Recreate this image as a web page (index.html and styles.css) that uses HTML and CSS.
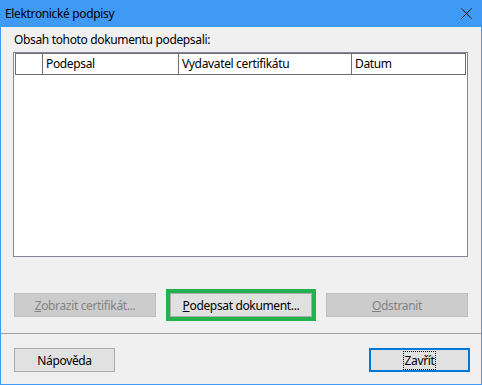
FILE: index.html
```html
<!DOCTYPE html>
<html lang="cs">
<head>
    <meta charset="UTF-8">
    <title>Elektronické podpisy</title>
    <link rel="stylesheet" href="styles.css">
</head>
<body>

    <div class="window">
        <div class="titlebar">
            <span class="title">Elektronické podpisy</span>
            <svg class="close" width="11" height="11" viewBox="0 0 11 11">
                <path d="M0.5 0.5 L10.5 10.5 M10.5 0.5 L0.5 10.5" stroke="#000" stroke-width="1" fill="none"/>
            </svg>
        </div>

        <div class="content">
            <div class="caption">Obsah tohoto dokumentu podepsali:</div>

            <div class="list">
                <div class="list-head">
                    <div class="col"></div>
                    <div class="col">Podepsal</div>
                    <div class="col">Vydavatel certifikátu</div>
                    <div class="col">Datum</div>
                </div>
            </div>

            <div class="actions">
                <button class="btn" disabled><u>Z</u>obrazit certifikát...</button>
                <button class="btn highlight"><u>P</u>odepsat dokument...</button>
                <button class="btn" disabled><u>O</u>dstranit</button>
            </div>
        </div>

        <div class="footer">
            <button class="btn small">Nápověda</button>
            <button class="btn small default"><span class="focus">Zavřít</span></button>
        </div>
    </div>

</body>
</html>
```

FILE: styles.css
```css
* {
    margin: 0;
    padding: 0;
    box-sizing: border-box;
}

body {
    font-family: "Noto Sans", Arial, sans-serif;
    font-size: 12px;
    letter-spacing: -0.35px;
    color: #000000;
    background: #f0f0f0;
}

.window {
    width: 482px;
    height: 385px;
    border: 1px solid #3f9af5;
    border-top: none;
    background: #f0f0f0;
    display: flex;
    flex-direction: column;
}

.titlebar {
    height: 27px;
    background: #3f9af5;
    display: flex;
    justify-content: space-between;
    align-items: center;
    padding: 0 9px 0 4px;
}

.title {
    line-height: 15px;
}

.content {
    padding: 5px 13px 0 12px;
}

.caption {
    line-height: 15px;
    padding-left: 1px;
}

.list {
    margin-top: 5px;
    height: 205px;
    background: #ffffff;
    border: 1px solid #828790;
    padding: 0 1px 0 1px;
}

.list-head {
    display: grid;
    grid-template-columns: 26px 136px 173px 116px;
    height: 22px;
    border: 1px solid #6e6e6e;
}

.list-head .col {
    line-height: 19px;
    padding-left: 3px;
    border-left: 1px solid #6e6e6e;
}

.list-head .col:first-child {
    border-left: none;
}

.actions {
    margin-top: 36px;
    display: grid;
    grid-template-columns: 142px 142px 142px;
    justify-content: space-between;
    padding-left: 1px;
}

.btn {
    font-family: inherit;
    font-size: 12px;
    letter-spacing: inherit;
    color: #000000;
    height: 24px;
    background: #e1e1e1;
    border: 1px solid #adadad;
}

.btn:disabled {
    background: #cccccc;
    border-color: #bfbfbf;
    color: #838383;
}

.btn.highlight {
    outline: 4px solid #22b14c;
    outline-offset: 0;
}

.footer {
    margin-top: 16px;
    border-top: 1px solid #a0a0a0;
    padding: 14px 11px 0 13px;
    display: flex;
    justify-content: space-between;
}

.btn.small {
    width: 101px;
}

.btn.default {
    border: 2px solid #0078d7;
}

.focus {
    outline: 1px dotted #000000;
    padding: 0 1px;
}
```
